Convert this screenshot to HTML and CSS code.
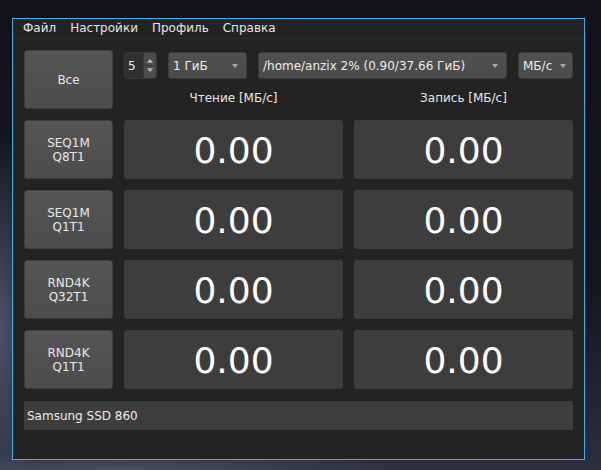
FILE: index.html
```html
<!DOCTYPE html>
<html lang="ru">
<head>
<meta charset="utf-8">
<title>KDiskMark</title>
<link rel="stylesheet" href="styles.css">
</head>
<body>
<div class="desk">
  <div class="window">
    <div class="menubar">
      <span class="menu">Файл</span>
      <span class="menu">Настройки</span>
      <span class="menu">Профиль</span>
      <span class="menu">Справка</span>
    </div>
    <div class="content">
      <div class="grid">
        <button class="btn all">Все</button>
        <div class="topright">
          <div class="controls">
            <div class="spin">
              <span class="spinval">5</span>
              <span class="spinarrows">
                <svg width="13" height="27" viewBox="0 0 13 27"><path d="M3 10.5 L6.5 6.5 L10 10.5 Z" fill="#b8b8b8"/><line x1="0" y1="13.5" x2="13" y2="13.5" stroke="#3a3a3a"/><path d="M3 16.5 L6.5 20.5 L10 16.5 Z" fill="#b8b8b8"/></svg>
              </span>
            </div>
            <div class="combo size"><span>1 ГиБ</span><i class="arrow"></i></div>
            <div class="combo path"><span>/home/anzix 2% (0.90/37.66 ГиБ)</span><i class="arrow"></i></div>
            <div class="combo unit"><span>МБ/с</span><i class="arrow"></i></div>
          </div>
          <div class="heads">
            <span>Чтение [МБ/с]</span>
            <span>Запись [МБ/с]</span>
          </div>
        </div>

        <button class="btn test">SEQ1M<br>Q8T1</button>
        <div class="val">0.00</div>
        <div class="val">0.00</div>

        <button class="btn test">SEQ1M<br>Q1T1</button>
        <div class="val">0.00</div>
        <div class="val">0.00</div>

        <button class="btn test">RND4K<br>Q32T1</button>
        <div class="val">0.00</div>
        <div class="val">0.00</div>

        <button class="btn test">RND4K<br>Q1T1</button>
        <div class="val">0.00</div>
        <div class="val">0.00</div>
      </div>
      <div class="comment">Samsung SSD 860</div>
    </div>
  </div>
</div>
</body>
</html>
```

FILE: styles.css
```css
* { box-sizing: border-box; }
html, body { margin: 0; padding: 0; }
body {
  width: 601px;
  height: 470px;
  overflow: hidden;
  font-family: "DejaVu Sans", sans-serif;
  font-size: 12px;
  color: #eceff0;
  background:
    radial-gradient(ellipse 40px 200px at 0px 330px, #4d5468 0%, rgba(77,84,104,0) 100%),
    radial-gradient(ellipse 300px 18px at 120px 470px, #4a5063 0%, rgba(74,80,99,0) 100%),
    radial-gradient(ellipse 200px 14px at 520px 470px, #2c2f3a 0%, rgba(44,47,58,0) 100%),
    linear-gradient(180deg, #121319 0%, #151720 60%, #2a2f3f 100%);
}
.desk { padding: 18px 0 0 12px; }
.window {
  width: 573px;
  height: 442px;
  border: 1px solid #3daee9;
  background: #232323;
  display: flex;
  flex-direction: column;
}
.menubar {
  height: 20px;
  border-bottom: 1px solid #2c2c2c;
  display: flex;
  align-items: center;
  gap: 14px;
  padding: 0 0 1px 10px;
  font-size: 12px;
  color: #e6e6e6;
}
.content { padding: 11px 11px 0 11px; }
.grid {
  display: grid;
  grid-template-columns: 89px 1fr 1fr;
  grid-auto-rows: 59px;
  column-gap: 11px;
  row-gap: 11px;
}
.btn {
  font-family: "DejaVu Sans", sans-serif;
  color: #e8e8e8;
  background: linear-gradient(180deg, #555555 0%, #4d4d4d 100%);
  border: 1px solid #3e3e3e;
  border-radius: 3px;
  box-shadow: inset 0 1px 0 #5c5c5c;
  padding: 0;
  margin: 0;
}
.all { font-size: 12px; }
.test { font-size: 12px; line-height: 14px; }
.topright {
  grid-column: 2 / 4;
  display: flex;
  flex-direction: column;
}
.controls {
  margin-top: 2px;
  height: 27px;
  display: flex;
  gap: 11px;
}
.spin {
  width: 33px;
  display: flex;
  border: 1px solid #3a3a3a;
  border-radius: 3px;
  overflow: hidden;
}
.spinval {
  flex: 1;
  background: #303030;
  display: flex;
  align-items: center;
  padding-left: 3px;
  font-size: 12px;
}
.spinarrows {
  width: 13px;
  background: #4c4c4c;
  border-left: 1px solid #3a3a3a;
  display: flex;
}
.spinarrows svg { display: block; margin-top: -1px; }
.combo {
  background: linear-gradient(180deg, #515151 0%, #4b4b4b 100%);
  border: 1px solid #3c3c3c;
  border-radius: 3px;
  display: flex;
  align-items: center;
  padding: 0 8px 0 4px;
  justify-content: space-between;
  font-size: 12px;
  color: #ececec;
}
.size { width: 79px; }
.path { flex: 1; }
.unit { width: 55px; padding-right: 6px; }
.arrow {
  width: 0; height: 0;
  border-left: 3.5px solid transparent;
  border-right: 3.5px solid transparent;
  border-top: 4px solid #a8a8a8;
}
.heads {
  flex: 1;
  display: grid;
  grid-template-columns: 1fr 1fr;
  column-gap: 11px;
  align-items: center;
  text-align: center;
  padding-top: 8px;
  font-size: 12px;
  color: #e6e6e6;
}
.val {
  background: #3d3d3d;
  border-radius: 3px;
  display: flex;
  align-items: center;
  justify-content: center;
  font-size: 36px;
  color: #ffffff;
  padding-top: 1px;
}
.comment {
  margin-top: 12px;
  height: 29px;
  background: #3d3d3d;
  border-radius: 2px;
  display: flex;
  align-items: center;
  padding-left: 3px;
  font-size: 12px;
  color: #ececec;
}
```
